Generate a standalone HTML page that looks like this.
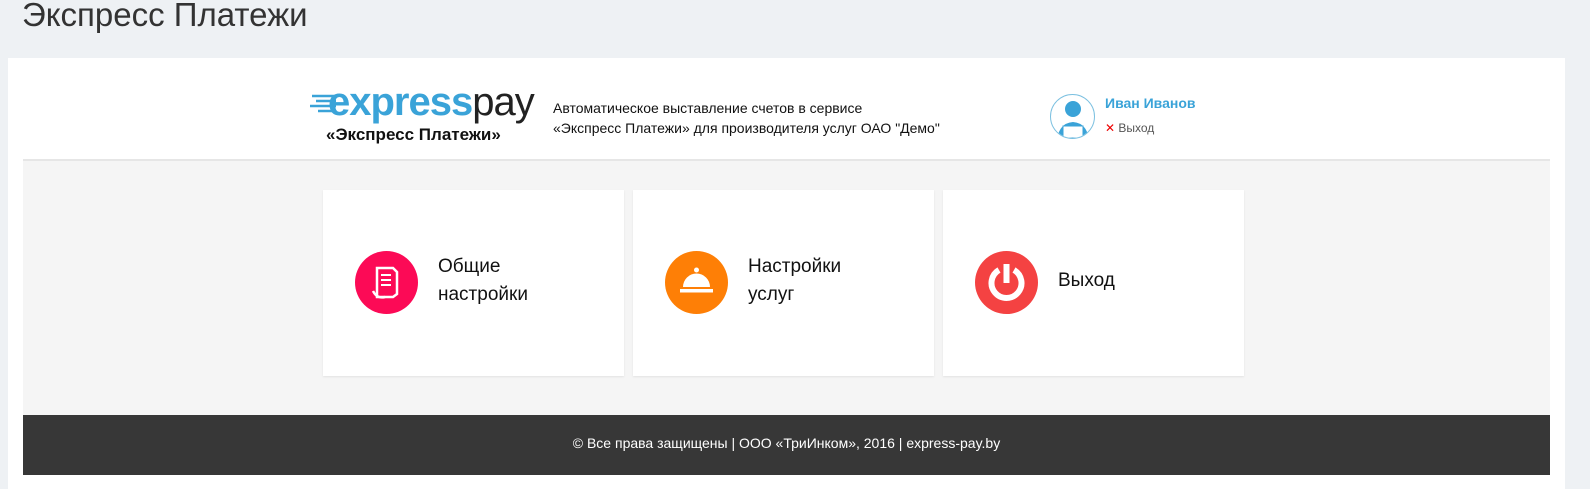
<!DOCTYPE html>
<html><head><meta charset="utf-8"><style>
*{margin:0;padding:0;box-sizing:border-box}
body{width:1590px;height:489px;background:#eef1f4;font-family:"Liberation Sans","DejaVu Sans",sans-serif;position:relative;overflow:hidden}
.title{position:absolute;left:22px;top:-4px;font-size:33px;color:#333;font-weight:300}
.panel{position:absolute;left:8px;top:58px;width:1557px;height:431px;background:#fff}
.hdr{position:absolute;left:23px;top:58px;width:1527px;height:103px;border-bottom:2px solid #e6e6e6}
.gray{position:absolute;left:23px;top:161px;width:1527px;height:254px;background:#f5f5f5}
.foot{position:absolute;left:23px;top:415px;width:1527px;height:60px;background:#373737;color:#fff;font-size:14px;text-align:center;line-height:56px}
.card{position:absolute;top:190px;width:301px;height:186px;background:#fff;box-shadow:0 1px 2px rgba(0,0,0,.08)}
.ic{position:absolute;left:32px;top:61px;width:63px;height:63px;border-radius:50%}
.lbl{position:absolute;left:115px;font-size:19px;color:#111;line-height:28px}
</style></head><body>
<div class="title">Экспресс Платежи</div>
<div class="panel"></div>
<div class="hdr"></div>
<div style="position:absolute;left:310px;top:88px;width:30px;height:30px">
<svg width="30" height="30"><g stroke="#3aa3d8" stroke-width="2.5"><line x1="2" y1="8" x2="26" y2="8"/><line x1="6" y1="13" x2="26" y2="13"/><line x1="0" y1="18" x2="26" y2="18"/><line x1="8" y1="23" x2="26" y2="23"/></g></svg></div>
<div style="position:absolute;left:328px;top:78px;font-size:40px;letter-spacing:-1px;line-height:48px"><span style="color:#3aa3d8;font-weight:bold">express</span><span style="color:#222;font-weight:300">pay</span></div>
<div style="position:absolute;left:326px;top:125px;font-size:17px;font-weight:bold;color:#111">«Экспресс Платежи»</div>
<div style="position:absolute;left:553px;top:98px;font-size:14px;line-height:20px;color:#111">Автоматическое выставление счетов в сервисе<br>«Экспресс Платежи» для производителя услуг ОАО "Демо"</div>
<div style="position:absolute;left:1050px;top:94px;width:45px;height:45px;border-radius:50%;border:1.5px solid #7bc0e0;overflow:hidden">
<svg width="45" height="45"><circle cx="22" cy="14" r="8" fill="#3aa3d8"/><path d="M6 45 Q8 28 22 27 Q36 28 38 45Z" fill="#3aa3d8"/><rect x="12" y="31" width="20" height="12" fill="#fff" stroke="#3aa3d8"/></svg></div>
<div style="position:absolute;left:1105px;top:95px;font-size:14px;font-weight:bold;color:#3aa3d8">Иван Иванов</div>
<div style="position:absolute;left:1105px;top:121px;font-size:12px;color:#555"><span style="color:#e00;font-weight:bold">✕</span> Выход</div>
<div class="gray"></div>
<div class="card" style="left:323px"><div class="ic" style="background:#fc0a56"><svg width="63" height="63"><path d="M22 17h16l4 4v22l-4 3H22z" fill="none" stroke="#fff" stroke-width="2.5"/><g stroke="#fff" stroke-width="2"><line x1="26" y1="24" x2="36" y2="24"/><line x1="26" y1="29" x2="36" y2="29"/><line x1="26" y1="34" x2="36" y2="34"/></g><path d="M18 40q4 8 12 6" stroke="#fff" stroke-width="2.5" fill="none"/></svg></div><div class="lbl" style="top:63px">Общие<br>настройки</div></div>
<div class="card" style="left:633px"><div class="ic" style="background:#fe7f06"><svg width="63" height="63"><circle cx="31.5" cy="19" r="2.5" fill="#fff"/><path d="M18 36a13.5 13.5 0 0 1 27 0z" fill="#fff"/><rect x="15" y="38" width="33" height="3.5" fill="#fff"/></svg></div><div class="lbl" style="top:63px">Настройки<br>услуг</div></div>
<div class="card" style="left:943px"><div class="ic" style="background:#f44242"><svg width="63" height="63"><path d="M24 19a15 15 0 1 0 15 0" fill="none" stroke="#fff" stroke-width="6"/><line x1="31.5" y1="13" x2="31.5" y2="32" stroke="#fff" stroke-width="6"/></svg></div><div class="lbl" style="top:77px">Выход</div></div>
<div class="foot">© Все права защищены | ООО «ТриИнком», 2016 | express-pay.by</div>
</body></html>
